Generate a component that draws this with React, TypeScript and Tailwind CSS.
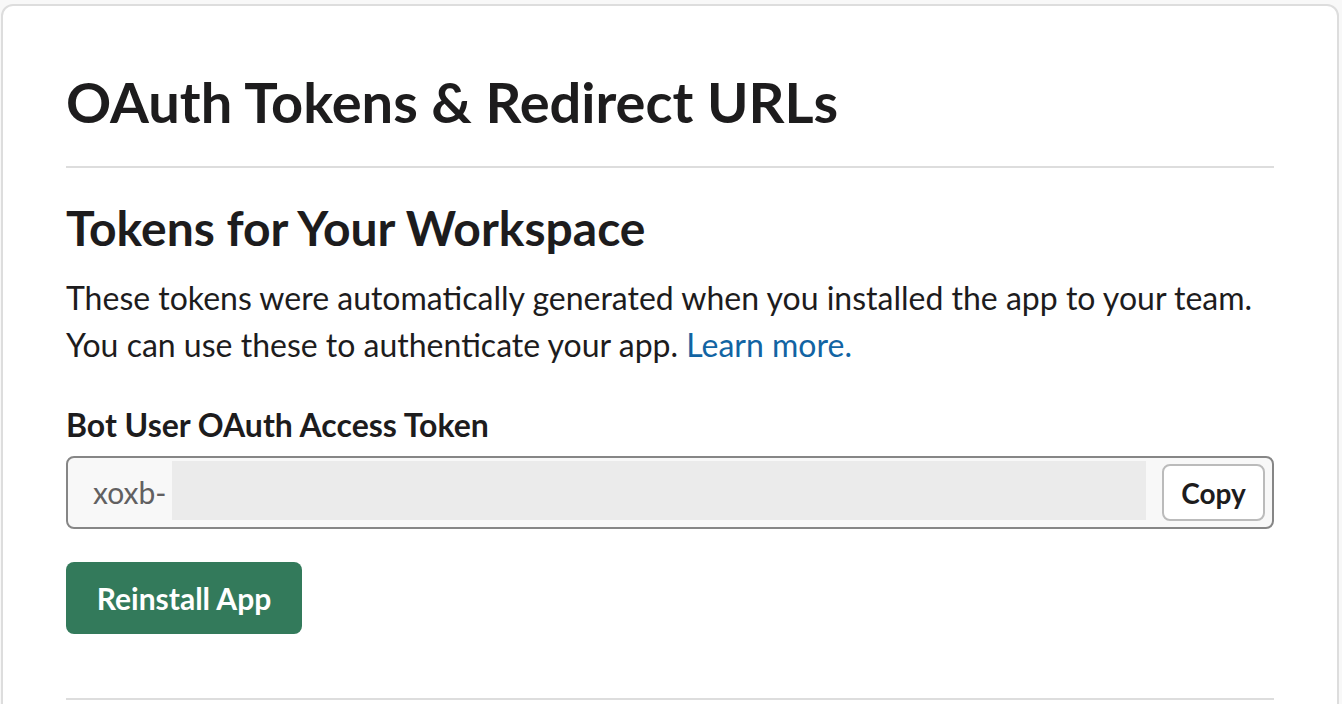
export default function App() {
  return (
    <div className="min-h-[704px] overflow-hidden bg-[#f8f8f8] pl-[1px] pr-[3px] pt-[4px] font-['Lato','Noto_Sans',sans-serif] text-[#1d1c1d]">
      <div className="h-[720px] rounded-[12px] border-2 border-[#dddddd] bg-white px-[63px] pt-[60px]">
        {/* Page title */}
        <h1 className="text-[56px] font-bold leading-[72px]">OAuth Tokens &amp; Redirect URLs</h1>
        <div className="mt-[28px] h-[2px] bg-[#dddddd]" />

        {/* Tokens section */}
        <h2 className="mt-[30px] text-[48px] font-bold leading-[60px]">Tokens for Your Workspace</h2>
        <p className="mt-[16px] text-[32px] leading-[47px]">
          These tokens were automatically generated when you installed the app to your team.
          <br />
          You can use these to authenticate your app.{' '}
          <a href="#" className="text-[#1264a3]">
            Learn more.
          </a>
        </p>

        <div className="mt-[37px] text-[32px] font-bold leading-[40px]">Bot User OAuth Access Token</div>
        <div className="mt-[11px] flex h-[73px] items-center rounded-[8px] border-2 border-[#868686] bg-[#f8f8f8] pl-[25px] pr-[7px]">
          <span className="text-[30px] text-[#616061]">xoxb-</span>
          <div className="mb-[4px] ml-[5px] h-[59px] flex-1 bg-[#ebebeb]" />
          <button className="ml-[16px] h-[57px] w-[103px] rounded-[8px] border-2 border-[#bbbbbb] bg-white text-[28px] font-bold">
            Copy
          </button>
        </div>

        <button className="mt-[33px] h-[72px] w-[236px] rounded-[8px] bg-[#337a5b] text-[30px] font-bold text-white">
          Reinstall App
        </button>

        <div className="mt-[64px] h-[2px] bg-[#dddddd]" />
      </div>
    </div>
  );
}
